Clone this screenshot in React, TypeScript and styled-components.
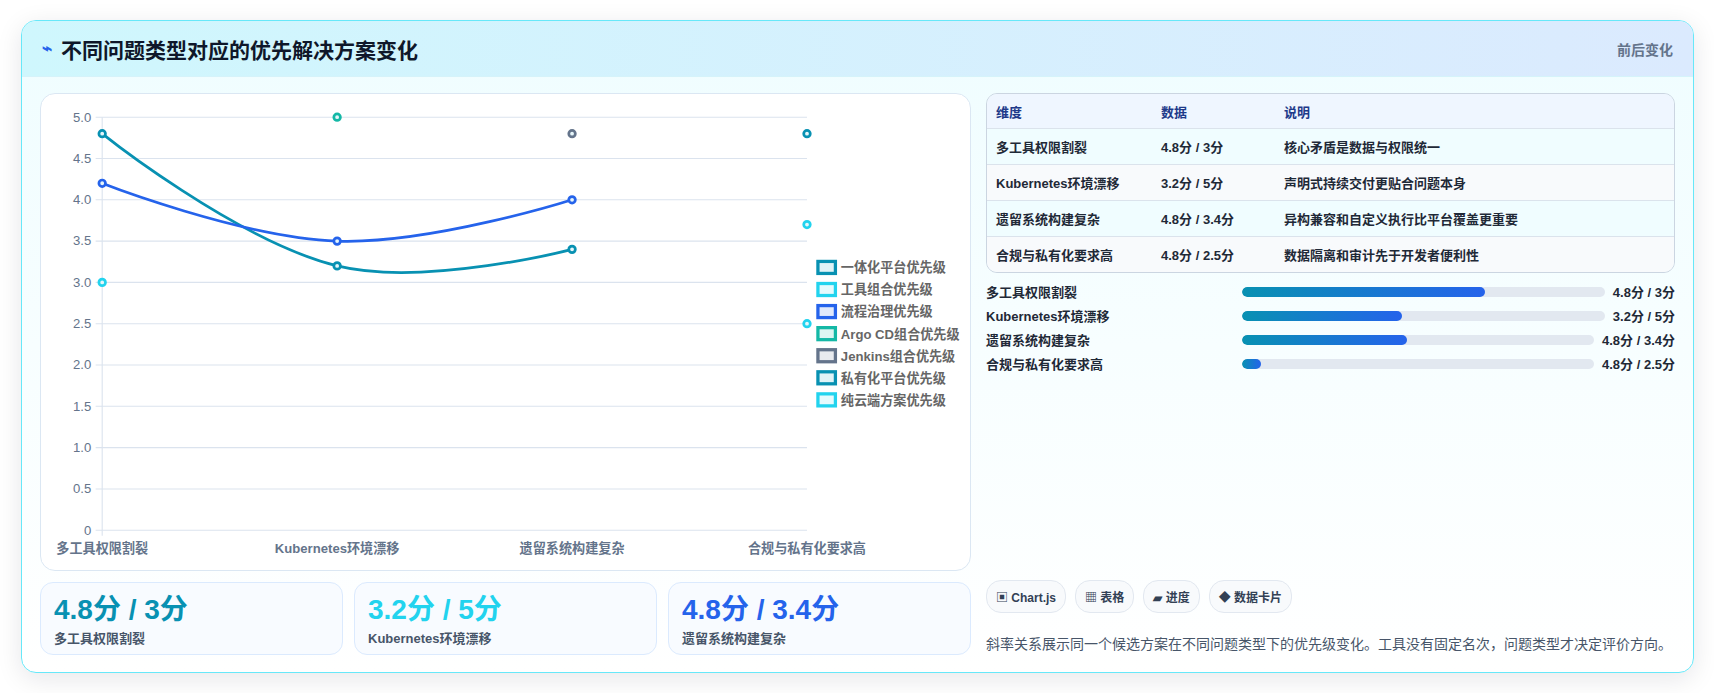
import React from "react";
import styled, { createGlobalStyle } from "styled-components";

const Global = createGlobalStyle`
  html, body { margin: 0; background: #fff; }
  body { font-family: "Liberation Sans", "Noto Sans CJK SC", sans-serif; color: #0f172a; }
`;

const Page = styled.div`padding: 20px 20px 20px 21px;`;
const Card = styled.div`
  border: 1px solid #67e8f9; border-radius: 15px; overflow: hidden;
  box-shadow: 0 6px 26px rgba(15,23,42,0.10);
  background: linear-gradient(180deg, #effdff 0%, #ffffff 100%);
`;
const Header = styled.div`
  height: 55px; display: flex; align-items: center; justify-content: space-between;
  padding: 0 20px; background: linear-gradient(90deg, #cff7fd 0%, #dbeafe 100%);
  border-bottom: 1px solid #d5f3fa;
`;
const Title = styled.h1`margin: 0; font-size: 21px; font-weight: 700; display: flex; align-items: center; gap: 9px; color: #0f172a;`;
const Bolt = styled.span`color: #2563eb; font-size: 17px;`;
const HeadRight = styled.span`font-size: 14px; font-weight: 700; color: #64748b;`;
const Body = styled.div`display: grid; grid-template-columns: 931px 1fr; gap: 15px; padding: 16px 18px 17px;`;
const Col = styled.div`display: flex; flex-direction: column; gap: 11px;`;
const ChartBox = styled.div`height: 478px; background: #fff; border: 1px solid #dbe7f3; border-radius: 15px; box-sizing: border-box; overflow: hidden;`;
const Stats = styled.div`display: grid; grid-template-columns: repeat(3, 1fr); gap: 11px;`;
const Stat = styled.div`height: 73px; box-sizing: border-box; border: 1px solid #dbeafe; border-radius: 13px; background: #f8fbff; padding: 9px 13px;`;
const StatNum = styled.div<{ c: string }>`font-size: 28px; font-weight: 700; color: ${p => p.c}; line-height: 35px;`;
const StatLbl = styled.div`font-size: 13px; font-weight: 700; color: #475569; margin-top: 1px;`;

const Table = styled.div`border: 1px solid #cbd5e1; border-radius: 11px; overflow: hidden; font-size: 13px; font-weight: 700;`;
const Row = styled.div<{ bg: string; head?: boolean }>`
  display: grid; grid-template-columns: 165px 123px 1fr; height: ${p => p.head ? 34 : 35}px; align-items: center;
  padding-left: 9px; background: ${p => p.bg}; color: ${p => p.head ? "#1e3a8a" : "#1f2937"};
  & + & { border-top: 1px solid #dbe3ec; }
`;
const Bars = styled.div`display: flex; flex-direction: column; gap: 7px;`;
const BarRow = styled.div`display: grid; grid-template-columns: 248px 1fr auto; gap: 8px; align-items: center; height: 17px; font-size: 13px; font-weight: 700; color: #1f2937;`;
const Track = styled.div`height: 10px; border-radius: 5px; background: #e2e8f0; overflow: hidden;`;
const Fill = styled.div`height: 100%; border-radius: 5px; background: linear-gradient(90deg, #0891b2, #2563eb);`;
const Spacer = styled.div`flex: 1;`;
const Chips = styled.div`display: flex; gap: 9px;`;
const Chip = styled.span`font-size: 12px; font-weight: 700; color: #334155; background: #f8fafc; border: 1px solid #e2e8f0; border-radius: 15px; padding: 7px 9px;`;
const Note = styled.p`margin: 11px 0 2px; font-size: 14px; color: #475569;`;
const RightCol = styled.div`display: flex; flex-direction: column; gap: 9px;`;

const yv = (v: number) => 399 - 75.6 * v;
const xs = [56, 271, 486, 701];
const cats = ["多工具权限割裂", "Kubernetes环境漂移", "遗留系统构建复杂", "合规与私有化要求高"];
const legend: [string, string, string][] = [
  ["一体化平台优先级", "#0891b2", "#dff3f7"],
  ["工具组合优先级", "#22d3ee", "#e4fafd"],
  ["流程治理优先级", "#2563eb", "#e0e9fb"],
  ["Argo CD组合优先级", "#14b8a6", "#dcf5f2"],
  ["Jenkins组合优先级", "#64748b", "#e8ebef"],
  ["私有化平台优先级", "#0891b2", "#dff3f7"],
  ["纯云端方案优先级", "#22d3ee", "#e4fafd"],
];
const dots: [number, number, string][] = [
  [0, 4.8, "#0891b2"], [1, 3.2, "#0891b2"], [2, 3.4, "#0891b2"],
  [0, 4.2, "#2563eb"], [1, 3.5, "#2563eb"], [2, 4.0, "#2563eb"],
  [0, 3.0, "#22d3ee"], [1, 5.0, "#14b8a6"], [2, 4.8, "#64748b"],
  [3, 4.8, "#0891b2"], [3, 3.7, "#22d3ee"], [3, 2.5, "#22d3ee"],
];

function Chart() {
  const ticks = [0, 0.5, 1, 1.5, 2, 2.5, 3, 3.5, 4, 4.5, 5];
  return (
    <svg width="931" height="478" viewBox="0 0 852 437" fontFamily='"Liberation Sans","Noto Sans CJK SC",sans-serif'>
      {ticks.map(t => (
        <g key={t}>
          <line x1={50} x2={701} y1={yv(t)} y2={yv(t)} stroke="#dbe3ee" strokeWidth={1} />
          <text x={46} y={yv(t) + 4} textAnchor="end" fontSize={12} fill="#64748b">{t === 0 ? "0" : t.toFixed(1)}</text>
        </g>
      ))}
      <line x1={56} x2={56} y1={21} y2={404} stroke="#dbe3ee" />
      {cats.map((c, i) => (
        <text key={c} x={xs[i]} y={420} textAnchor="middle" fontSize={12} fontWeight={700} fill="#64748b">{c}</text>
      ))}
      <path d="M56,36.1 C56,36.1 179,134.3 271,157.1 C351,176.7 486,142 486,142" fill="none" stroke="#0891b2" strokeWidth={2.5} />
      <path d="M56,81.5 C56,81.5 184.4,131.4 271,134.4 C356.6,137.4 486,96.6 486,96.6" fill="none" stroke="#2563eb" strokeWidth={2.5} />
      {dots.map(([i, v, c], k) => (
        <circle key={k} cx={xs[i]} cy={yv(v)} r={3} fill="#e6f6fa" stroke={c} strokeWidth={2.5} />
      ))}
      {legend.map(([l, c, f], i) => (
        <g key={l}>
          <rect x={711} y={153 + i * 20.2} width={16} height={11} fill={f} stroke={c} strokeWidth={3} />
          <text x={732} y={163 + i * 20.2} fontSize={12} fontWeight={700} fill="#666">{l}</text>
        </g>
      ))}
    </svg>
  );
}

const rows = [
  ["多工具权限割裂", "4.8分 / 3分", "核心矛盾是数据与权限统一"],
  ["Kubernetes环境漂移", "3.2分 / 5分", "声明式持续交付更贴合问题本身"],
  ["遗留系统构建复杂", "4.8分 / 3.4分", "异构兼容和自定义执行比平台覆盖更重要"],
  ["合规与私有化要求高", "4.8分 / 2.5分", "数据隔离和审计先于开发者便利性"],
];
const bars: [string, number, string][] = [
  ["多工具权限割裂", 67, "4.8分 / 3分"],
  ["Kubernetes环境漂移", 44, "3.2分 / 5分"],
  ["遗留系统构建复杂", 47, "4.8分 / 3.4分"],
  ["合规与私有化要求高", 5.5, "4.8分 / 2.5分"],
];

export default function App() {
  return (
    <Page>
      <Global />
      <Card>
        <Header>
          <Title><Bolt>⌁</Bolt>不同问题类型对应的优先解决方案变化</Title>
          <HeadRight>前后变化</HeadRight>
        </Header>
        <Body>
          <Col>
            <ChartBox><Chart /></ChartBox>
            <Stats>
              <Stat><StatNum c="#0891b2">4.8分 / 3分</StatNum><StatLbl>多工具权限割裂</StatLbl></Stat>
              <Stat><StatNum c="#22d3ee">3.2分 / 5分</StatNum><StatLbl>Kubernetes环境漂移</StatLbl></Stat>
              <Stat><StatNum c="#2563eb">4.8分 / 3.4分</StatNum><StatLbl>遗留系统构建复杂</StatLbl></Stat>
            </Stats>
          </Col>
          <RightCol>
            <Table>
              <Row head bg="#eff6ff"><span>维度</span><span>数据</span><span>说明</span></Row>
              {rows.map((r, i) => (
                <Row key={r[0]} bg={i % 2 === 0 ? "#f0fdff" : "#f8fafc"}>
                  <span>{r[0]}</span><span>{r[1]}</span><span>{r[2]}</span>
                </Row>
              ))}
            </Table>
            <Bars>
              {bars.map(([l, w, v]) => (
                <BarRow key={l}>
                  <span>{l}</span>
                  <Track><Fill style={{ width: `${w}%` }} /></Track>
                  <span>{v}</span>
                </BarRow>
              ))}
            </Bars>
            <Spacer />
            <Chips>
              <Chip>▣ Chart.js</Chip>
              <Chip>▦ 表格</Chip>
              <Chip>▰ 进度</Chip>
              <Chip>◆ 数据卡片</Chip>
            </Chips>
            <Note>斜率关系展示同一个候选方案在不同问题类型下的优先级变化。工具没有固定名次，问题类型才决定评价方向。</Note>
          </RightCol>
        </Body>
      </Card>
    </Page>
  );
}
